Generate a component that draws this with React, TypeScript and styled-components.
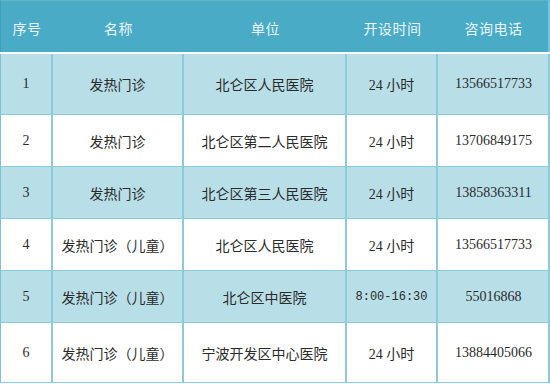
import React from "react";
import styled, { createGlobalStyle } from "styled-components";

const Global = createGlobalStyle`
  html, body { margin: 0; padding: 0; background: #ffffff; }
  body { font-family: "Noto Sans CJK SC", "Noto Sans", sans-serif; }
`;

const COLS = "52px 131px 163px 91px 111px";
const LINE = "#8ccadb";

const Table = styled.div`
  width: 550px;
  display: flex;
  flex-direction: column;
  box-sizing: border-box;
`;

const HeadRow = styled.div`
  display: grid;
  grid-template-columns: ${COLS};
  height: 52px;
  background: #4aabc6;
  border-top: 1px solid #5fb6cd;
  border-left: 1px solid #3f9fba;
  border-right: 2px solid #7cc2d4;
  box-sizing: border-box;
  margin-bottom: 2px;
  width: 550px;
`;

const HeadCell = styled.div`
  display: flex;
  align-items: center;
  justify-content: center;
  color: #eaf5f9;
  font-size: 14px;
  padding-top: 3px;
  letter-spacing: 0.5px;
`;

const Row = styled.div<{ $alt: boolean; $h: number }>`
  display: grid;
  grid-template-columns: ${COLS};
  height: ${(p) => p.$h}px;
  background: ${(p) => (p.$alt ? "#b8dee8" : "#ffffff")};
  border-bottom: 1px solid ${LINE};
  border-left: 1px solid #7fc2d4;
  border-right: 2px solid ${LINE};
  box-sizing: border-box;
  width: 550px;
`;

const Cell = styled.div<{ $last?: boolean; $num?: boolean }>`
  display: flex;
  align-items: center;
  justify-content: center;
  border-right: ${(p) => (p.$last ? "none" : `2px solid ${LINE}`)};
  color: #2b2b2b;
  font-size: 14px;
  font-family: ${(p) =>
    p.$num
      ? `"Liberation Serif", "Noto Sans CJK SC", serif`
      : `"Noto Sans CJK SC", "Noto Sans", sans-serif`};
  white-space: nowrap;
  box-sizing: border-box;
`;

const Mixed = styled.span`
  font-family: "Liberation Serif", "Noto Sans CJK SC", serif;
  & > span {
    font-family: "Noto Sans CJK SC", sans-serif;
  }
`;

const Mono = styled.span`
  font-family: "Liberation Mono", monospace;
  font-size: 12px;
  color: #2b2b2b;
`;

type R = { n: string; name: string; unit: string; time: string; tel: string; h: number };

const rows: R[] = [
  { n: "1", name: "发热门诊", unit: "北仑区人民医院", time: "24", tel: "13566517733", h: 61 },
  { n: "2", name: "发热门诊", unit: "北仑区第二人民医院", time: "24", tel: "13706849175", h: 52 },
  { n: "3", name: "发热门诊", unit: "北仑区第三人民医院", time: "24", tel: "13858363311", h: 52 },
  { n: "4", name: "发热门诊（儿童）", unit: "北仑区人民医院", time: "24", tel: "13566517733", h: 52 },
  { n: "5", name: "发热门诊（儿童）", unit: "北仑区中医院", time: "8:00-16:30", tel: "55016868", h: 52 },
  { n: "6", name: "发热门诊（儿童）", unit: "宁波开发区中心医院", time: "24", tel: "13884405066", h: 60 },
];

export default function App() {
  return (
    <>
      <Global />
      <Table>
        <HeadRow>
          <HeadCell>序号</HeadCell>
          <HeadCell>名称</HeadCell>
          <HeadCell>单位</HeadCell>
          <HeadCell>开设时间</HeadCell>
          <HeadCell>咨询电话</HeadCell>
        </HeadRow>
        {rows.map((r, i) => (
          <Row key={r.n} $alt={i % 2 === 0} $h={r.h}>
            <Cell $num>{r.n}</Cell>
            <Cell>{r.name}</Cell>
            <Cell>{r.unit}</Cell>
            <Cell $num>
              {r.time === "24" ? (
                <Mixed>
                  24&nbsp;<span>小时</span>
                </Mixed>
              ) : (
                <Mono>{r.time}</Mono>
              )}
            </Cell>
            <Cell $num $last>
              {r.tel}
            </Cell>
          </Row>
        ))}
      </Table>
    </>
  );
}
